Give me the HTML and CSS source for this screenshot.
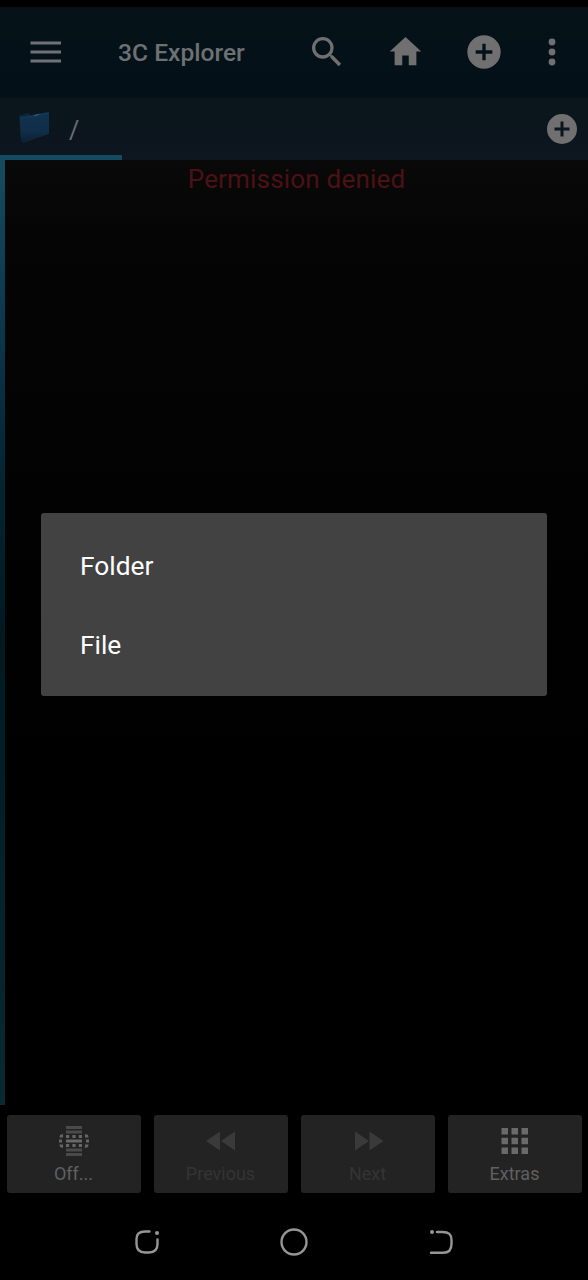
FILE: index.html
```html
<!DOCTYPE html>
<html lang="en">
<head>
<meta charset="utf-8">
<title>3C Explorer</title>
<link rel="stylesheet" href="styles.css">
</head>
<body>
<div class="screen">
  <header class="toolbar">
    <svg class="menu-icon" width="32" height="24" viewBox="0 0 32 24"><path d="M.5 3H31M.5 12H31M.5 21H31" fill="none" stroke="#707275" stroke-width="3"/></svg>
    <h1 class="title">3C Explorer</h1>
    <svg class="action" width="40" height="40" viewBox="0 0 24 24"><path d="M15.500 14h-.79l-.28-.27A6.470 6.470 0 0 0 16 9.500 6.500 6.500 0 1 0 9.500 16c1.610 0 3.090-.59 4.230-1.570l.27.28v.79l5 4.990L20.490 19l-4.990-5zm-6 0C7.010 14 5 11.990 5 9.500S7.010 5 9.500 5 14 7.010 14 9.500 11.990 14 9.500 14z"/></svg>
    <svg class="action" width="39" height="39" viewBox="0 0 24 24"><path d="M10 20.400v-6h4v6h4.700v-8.400h3L12 3 2.300 12h3v8.400z"/></svg>
    <svg class="action" width="40" height="40" viewBox="0 0 24 24"><path d="M12 2a10 10 0 1 0 0 20 10 10 0 0 0 0-20zm5 11h-4v4h-2v-4H7v-2h4V7h2v4h4z"/></svg>
    <svg class="action dots" width="8" height="28" viewBox="0 0 8 28"><circle cx="4" cy="4" r="3.400"/><circle cx="4" cy="14" r="3.400"/><circle cx="4" cy="24" r="3.400"/></svg>
  </header>
  <nav class="tabs">
    <div class="tab">
      <svg class="folder" width="32" height="33" viewBox="0 0 32 33">
        <defs><linearGradient id="fold" x1="0" y1="0" x2="0" y2="1"><stop offset="0" stop-color="#10334f"/><stop offset=".65" stop-color="#102d49"/><stop offset="1" stop-color="#0b2034"/></linearGradient></defs>
        <path d="M1 5l9-3 3 2L31 .5 31 23 5 32 3 29z" fill="#0b2840"/>
        <path d="M2 7l13-2 3-1 13-2v21L5 31 3 28z" fill="url(#fold)"/>
        <path d="M2 7l13-2 3-1 13-2" fill="none" stroke="#174460" stroke-width=".7"/>
        <path d="M16 4.700l5-1.200" stroke="#41616b" stroke-width="1"/>
      </svg>
      <span class="path">/</span>
    </div>
    <svg class="action add" width="36" height="36" viewBox="0 0 24 24"><path d="M12 2a10 10 0 1 0 0 20 10 10 0 0 0 0-20zm5 11h-4v4h-2v-4H7v-2h4V7h2v4h4z"/></svg>
  </nav>
  <main class="content"><p class="error">Permission denied</p></main>
  <footer class="buttons">
    <button class="button">
      <svg width="32" height="32" viewBox="0 0 32 32">
        <path d="M8 2.500H24M8 7H24M8 25H24M8 29.500H24" stroke="#4a4a4a" stroke-width="3"/>
        <path d="M8 16H24" stroke="#686868" stroke-width="3"/>
        <path d="M8 11.500H24M8 20.500H24" stroke="#666" stroke-width="3" stroke-dasharray="3.200"/>
        <path d="M1 14.500h3v3H1zM28 14.500h3v3h-3zM2 10l3-1v3.500H1.500zM30 10l-3-1v3.500h3.500zM2 22l3 1v-3.500H1.500zM30 22l-3 1v-3.500h3.500z" fill="#666"/>
      </svg>
      <span>Off...</span>
    </button>
    <button class="button disabled">
      <svg width="32" height="32" viewBox="0 0 32 32"><path d="M15 6.500v19L1 16zM30 6.500v19L16 16z" fill="#3a3a3a"/></svg>
      <span>Previous</span>
    </button>
    <button class="button disabled">
      <svg width="32" height="32" viewBox="0 0 32 32"><path d="M3 6.500v19L17 16zM17.500 6.500v19L31.500 16z" fill="#3a3a3a"/></svg>
      <span>Next</span>
    </button>
    <button class="button">
      <svg width="32" height="32" viewBox="0 0 32 32"><path d="M2.500 3h6.500v6.500H2.500zM12.500 3H19v6.500h-6.500zM22.500 3H29v6.500h-6.500zM2.500 12.800h6.500v6.500H2.500zM12.500 12.800H19v6.500h-6.500zM22.500 12.800H29v6.500h-6.500zM2.500 22.600h6.500v6.500H2.500zM12.500 22.600H19v6.500h-6.500zM22.500 22.600H29v6.500h-6.500z" fill="#6a6a6a"/></svg>
      <span>Extras</span>
    </button>
  </footer>
  <div class="system-nav">
    <svg width="30" height="30" viewBox="0 0 30 30"><path d="M16.500 4.500H12C6 4.500 3.500 7 3.500 12v5c0 6 2.500 8.500 8.500 8.500h4c6 0 8.500-2.500 8.500-8.500v-4.500"/><circle class="dot" cx="24" cy="6" r="2"/></svg>
    <svg width="30" height="30" viewBox="0 0 30 30"><circle cx="15" cy="15" r="12.500"/></svg>
    <svg width="30" height="30" viewBox="0 0 30 30"><path d="M12 5h5.500c6.500 0 9 2.500 9 8v4c0 6-2.500 8.800-8.500 8.800H6"/><circle class="dot" cx="7" cy="5" r="2"/></svg>
  </div>
  <div class="dialog" role="dialog">
    <div class="option">Folder</div>
    <div class="option">File</div>
  </div>
</div>
</body>
</html>
```
FILE: styles.css
```css
* { box-sizing: border-box; }
body { margin: 0; background: #000; font-family: Roboto, sans-serif; }
svg { display: block; flex: none; }
.screen { position: relative; width: 588px; height: 1280px; display: flex; flex-direction: column; padding-top: 7px; }
.toolbar { height: 91px; display: flex; align-items: center; padding: 0 32px 2px 30px; background: linear-gradient(#061218, #041118 60%, #031017); }
.title { flex: 1; margin: 2px 0 0 56px; font-size: 24.600px; font-weight: 500; line-height: 30px; color: #6e7173; }
.action { fill: #707070; margin-right: 39px; }
.action:nth-last-child(2) { margin-right: 44.500px; }
.dots { margin-right: 0; }
.tabs { height: 62px; display: flex; justify-content: space-between; background: linear-gradient(#0a161c, #0c151d 55%, #0e161f); }
.tab { width: 122px; border-bottom: 5px solid #154b60; display: flex; align-items: center; padding: 2px 0 0 18px; }
.path { margin-left: 19px; padding-top: 7px; font-size: 25px; line-height: 30px; color: #6b6e70; }
.tabs .add { margin: 13px 8px 0 0; }
.content { height: 945px; border-left: 5px solid; border-image: linear-gradient(#154b60 0, #0c394e 16%, #052636 32%, #021921 50%, #05212b 75%, #0a2932) 1; background: linear-gradient(#090909 0, #050505 8%, #030303 26%, #000 63%); }
.error { margin: 3px 0 0; font-size: 26px; line-height: 32px; letter-spacing: .19px; text-align: center; color: #4c1114; }
.buttons { height: 98px; padding: 10px 6px 10px 6.500px; display: grid; grid-template-columns: repeat(4, 134px); gap: 13px; }
.button { height: 78px; border: 0; border-radius: 3px; padding: 10px 0 0; display: flex; flex-direction: column; align-items: center; background: #232323; font: 18px/22px Roboto, sans-serif; color: #606060; }
.button span { margin-top: 6px; }
.disabled { color: #343434; }
.system-nav { height: 77px; display: flex; justify-content: space-between; padding: 24px 133px 0; }
.system-nav svg { fill: none; stroke: #969696; stroke-width: 2.4; stroke-linecap: round; }
.system-nav .dot { fill: #969696; stroke: none; }
.dialog { position: absolute; left: 41px; top: 513px; width: 506px; height: 183px; border-radius: 3px; padding: 14px 39px; background: #424242; }
.option { height: 78.500px; display: flex; align-items: center; font-size: 26.300px; color: #fff; }
```
